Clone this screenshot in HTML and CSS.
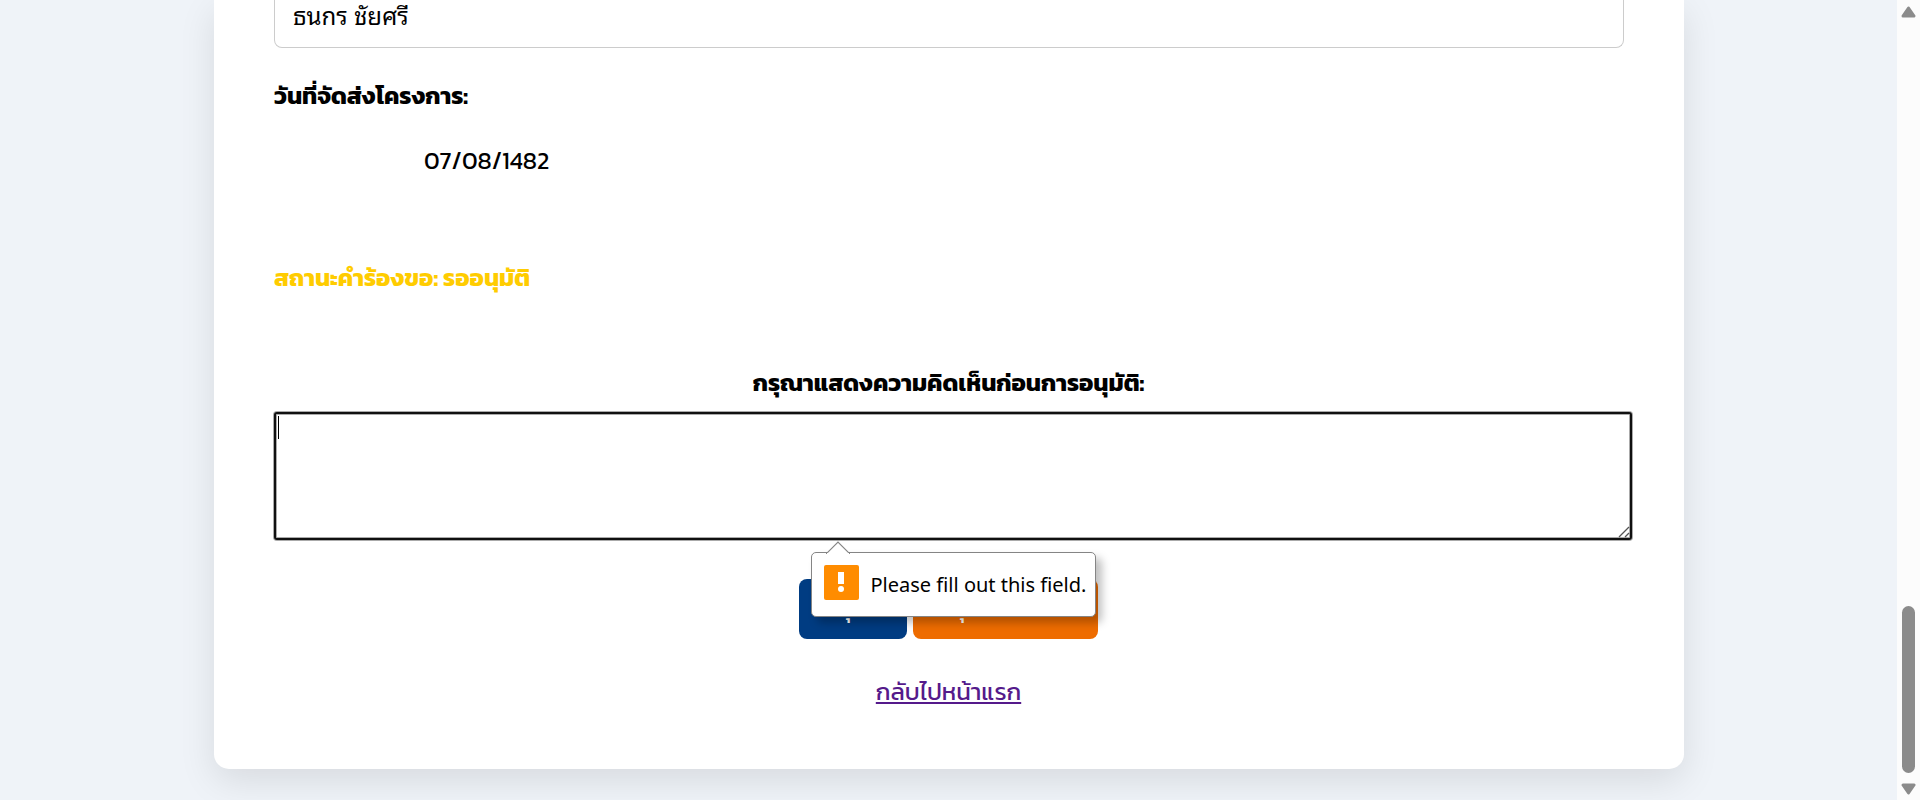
FILE: index.html
```html
<!DOCTYPE html>
<html lang="th">
<head>
<meta charset="utf-8">
<title>อนุมัติโครงการ</title>
<link rel="stylesheet" href="styles.css">
</head>
<body>
<main class="page">
  <form class="card" novalidate>
    <input class="name" type="text" value="ธนกร ชัยศรี" aria-label="ชื่อผู้ส่ง">
    <p class="label">วันที่จัดส่งโครงการ:</p>
    <p class="date">07/08/1482</p>
    <p class="status">สถานะคำร้องขอ: รออนุมัติ</p>
    <label class="question" for="comment">กรุณาแสดงความคิดเห็นก่อนการอนุมัติ:</label>
    <div class="comment-box">
      <textarea class="comment" id="comment" required></textarea>
      <span class="caret"></span>
      <svg class="grip" viewBox="0 0 12 12" width="12" height="12"><path d="M1 11 L11 1 M7 11 L11 7" stroke="#555" stroke-width="1.3" fill="none"/></svg>
    </div>
    <div class="actions">
      <button class="btn approve" type="submit">อนุมัติ</button>
      <button class="btn revise" type="submit">อนุมัติไม่ผ่าน</button>
      <div class="bubble" role="alert">
        <svg class="tip" viewBox="0 0 24 13" width="24" height="13"><path d="M0 13 L12 1 L24 13" fill="#fff" stroke="#858585" stroke-width="1.2"/><path d="M1 13H23" stroke="#fff" stroke-width="2"/></svg>
        <svg class="warn" viewBox="0 0 35 35" width="35" height="35"><rect width="35" height="35" rx="2" fill="#ff8c00"/><rect x="14" y="7" width="6" height="12" fill="#fff"/><circle cx="17" cy="24" r="3" fill="#fff"/></svg>
        <span>Please fill out this field.</span>
      </div>
    </div>
    <a class="back" href="#">กลับไปหน้าแรก</a>
  </form>
</main>
<aside class="scrollbar" aria-hidden="true">
  <svg viewBox="0 0 15 12" width="15" height="12"><path d="M7.500 2 L13 10 H2 Z" fill="#8b8b8b" stroke="#8b8b8b" stroke-width="3" stroke-linejoin="round"/></svg>
  <span class="thumb"></span>
  <svg viewBox="0 0 15 12" width="15" height="12"><path d="M7.500 10 L13 2 H2 Z" fill="#8b8b8b" stroke="#8b8b8b" stroke-width="3" stroke-linejoin="round"/></svg>
</aside>
</body>
</html>
```
FILE: styles.css
```css
* { box-sizing: border-box; }
body {
  margin: 0;
  min-height: 100vh;
  display: flex;
  background: #eff3f8;
  color: #000;
  font-family: Kanit, "Noto Sans Thai", "Noto Sans", sans-serif;
  font-size: 24px;
  line-height: 36px;
}
.page { flex: 1; padding: 0 213px 28px 214px; }
.card {
  display: flex;
  flex-direction: column;
  padding: 0 52px 59px 60px;
  background: #fff;
  border-radius: 0 0 15px 15px;
  box-shadow: 0 12px 36px rgba(0, 0, 0, 0.1);
}
p { margin: 0; }
.name {
  height: 48px;
  margin-right: 8px;
  padding: 0 18px 20px;
  border: 1px solid #ccc;
  border-top: 0;
  border-radius: 0 0 8px 8px;
  font: 24px/28px "Leelawadee UI", Tahoma, "Noto Sans Thai Looped", Sarabun, Loma, Garuda, "Liberation Sans", sans-serif;
}
.label { margin-top: 30px; font-weight: 700; }
.date { margin: 29px 0 0 150px; }
.status { margin-top: 81px; color: #ffcc00; font-weight: 700; }
.question { margin: 69px 9px 0 0; text-align: center; font-weight: 700; }
.comment-box { position: relative; display: flex; margin-top: 11px; }
.comment {
  width: 100%;
  height: 128px;
  border: 2px solid #101010;
  border-radius: 3px;
  box-shadow: 0 0 0 1px #aaa, inset 0 0 0 1px #aaa;
  outline: 0;
  resize: none;
}
.caret { position: absolute; left: 4px; top: 4px; width: 1px; height: 23px; background: #000; }
.grip { position: absolute; right: 2px; bottom: 2px; }
.actions {
  position: relative;
  display: flex;
  justify-content: center;
  gap: 6px;
  margin: 39px 9px 0 0;
}
.btn {
  height: 60px;
  padding: 0 24px;
  border: 0;
  border-radius: 8px;
  color: #fff;
  font: inherit;
  text-align: left;
  white-space: nowrap;
}
.approve { width: 108px; background: #003c82; }
.revise { width: 185px; background: #ee6c00; }
.bubble {
  position: absolute;
  left: calc(50% - 138px);
  top: -27px;
  display: flex;
  align-items: center;
  gap: 12px;
  height: 65px;
  width: 285px;
  padding: 0 12px;
  background: #fff;
  border: 1px solid #858585;
  border-radius: 5px;
  box-shadow: 6px 6px 8px rgba(0, 0, 0, 0.25);
  font: 20px/30px "Noto Sans", "Open Sans", sans-serif;
  white-space: nowrap;
}
.tip { position: absolute; left: 14px; top: -12px; }
.warn { flex: none; margin-bottom: 4px; }
.back { align-self: center; margin: 35px 9px 0 0; color: #551a8b; }
.scrollbar {
  display: flex;
  flex-direction: column;
  align-items: center;
  width: 23px;
  padding: 6px 0 5px;
  background: #fcfcfc;
}
.thumb { width: 13px; height: 167px; margin: auto 0 10px; border-radius: 7px; background: #8b8b8b; }
```
